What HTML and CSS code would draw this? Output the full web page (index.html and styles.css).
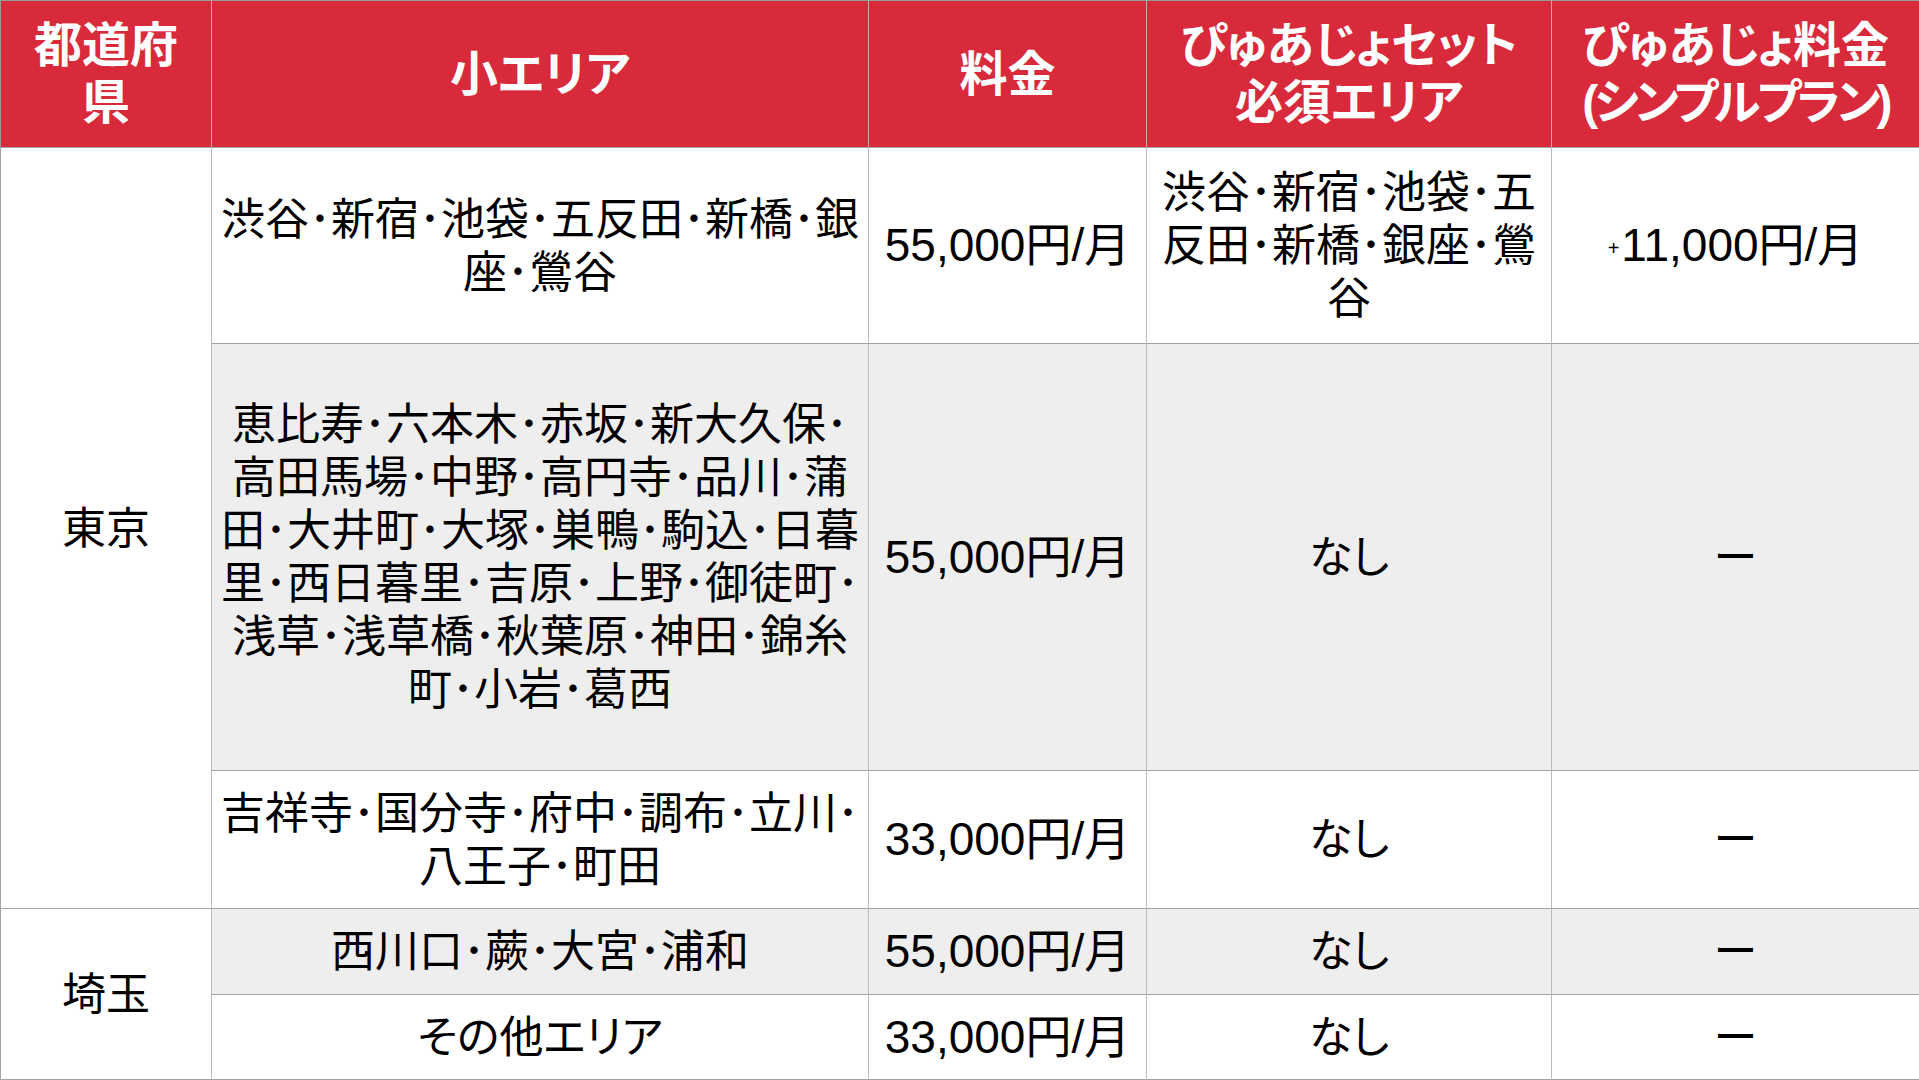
FILE: index.html
```html
<!DOCTYPE html>
<html lang="ja">
<head>
<meta charset="utf-8">
<title>料金表</title>
<link rel="stylesheet" href="styles.css">
</head>
<body>
<div class="table">
  <div class="cell head first"><div class="in">都道府<br>県</div></div>
  <div class="cell head"><div class="in">小エリア</div></div>
  <div class="cell head"><div class="in">料金</div></div>
  <div class="cell head"><div class="in">ぴゅあじょセット<br>必須エリア</div></div>
  <div class="cell head last"><div class="in">ぴゅあじょ料金<br><span class="tight">(シンプルプラン)</span></div></div>

  <div class="cell pref tokyo"><div class="in">東京</div></div>
  <div class="cell pref saitama"><div class="in">埼玉</div></div>

  <div class="cell area"><div class="in">渋谷･新宿･池袋･五反田･新橋･銀<br>座･鶯谷</div></div>
  <div class="cell price"><div class="in">55,000円/月</div></div>
  <div class="cell area"><div class="in">渋谷･新宿･池袋･五<br>反田･新橋･銀座･鶯<br>谷</div></div>
  <div class="cell price last"><div class="in"><span class="plus">+</span>11,000円/月</div></div>

  <div class="cell area alt"><div class="in">恵比寿･六本木･赤坂･新大久保･<br>高田馬場･中野･高円寺･品川･蒲<br>田･大井町･大塚･巣鴨･駒込･日暮<br>里･西日暮里･吉原･上野･御徒町･<br>浅草･浅草橋･秋葉原･神田･錦糸<br>町･小岩･葛西</div></div>
  <div class="cell price alt"><div class="in">55,000円/月</div></div>
  <div class="cell area alt"><div class="in">なし</div></div>
  <div class="cell area alt last"><div class="in">ー</div></div>

  <div class="cell area"><div class="in">吉祥寺･国分寺･府中･調布･立川･<br>八王子･町田</div></div>
  <div class="cell price"><div class="in">33,000円/月</div></div>
  <div class="cell area"><div class="in">なし</div></div>
  <div class="cell area last"><div class="in">ー</div></div>

  <div class="cell area alt"><div class="in">西川口･蕨･大宮･浦和</div></div>
  <div class="cell price alt"><div class="in">55,000円/月</div></div>
  <div class="cell area alt"><div class="in">なし</div></div>
  <div class="cell area alt last"><div class="in">ー</div></div>

  <div class="cell area"><div class="in">その他エリア</div></div>
  <div class="cell price"><div class="in">33,000円/月</div></div>
  <div class="cell area"><div class="in">なし</div></div>
  <div class="cell area last"><div class="in">ー</div></div>
</div>
</body>
</html>
```

FILE: styles.css
```css
* {
  box-sizing: border-box;
}

html, body {
  margin: 0;
  padding: 0;
  background: #ffffff;
  overflow: hidden;
}

body {
  font-family: "Liberation Sans", "Noto Sans CJK JP", sans-serif;
  color: #000000;
}

.table {
  display: grid;
  width: 1919px;
  grid-template-columns: 212px 657px 278px 405px 367px;
  grid-template-rows: 148px 196px 427px 138px 86px 85px;
}

.cell {
  display: flex;
  align-items: center;
  justify-content: center;
  text-align: center;
  white-space: nowrap;
  border-right: 1px solid #bcbcbc;
  border-bottom: 1px solid #a4a4a4;
  font-feature-settings: "palt";
}

.in {
  text-align: center;
}

.cell.last {
  border-right: none;
}

.head {
  background: #d82a3b;
  color: #ffffff;
  font-weight: 700;
  font-size: 48px;
  line-height: 57px;
  border-top: 1px solid #9a9a9a;
  border-right-color: #c9aeb1;
  border-bottom-color: #a4a4a4;
}

.head.first {
  border-left: 1px solid #9a9a9a;
}

.tight {
  letter-spacing: -4px;
}

.pref {
  grid-column: 1;
  font-size: 44px;
  line-height: 53px;
  border-left: 1px solid #a4a4a4;
  background: #ffffff;
}

.tokyo {
  grid-row: 2 / span 3;
}

.saitama {
  grid-row: 5 / span 2;
}

.area {
  font-size: 44px;
  line-height: 53px;
}

.price {
  font-size: 46px;
  line-height: 53px;
}

.alt {
  background: #eeeeee;
}

.plus {
  font-size: 20px;
  line-height: 1;
  position: relative;
  top: -6px;
  margin-right: 2px;
}
```
